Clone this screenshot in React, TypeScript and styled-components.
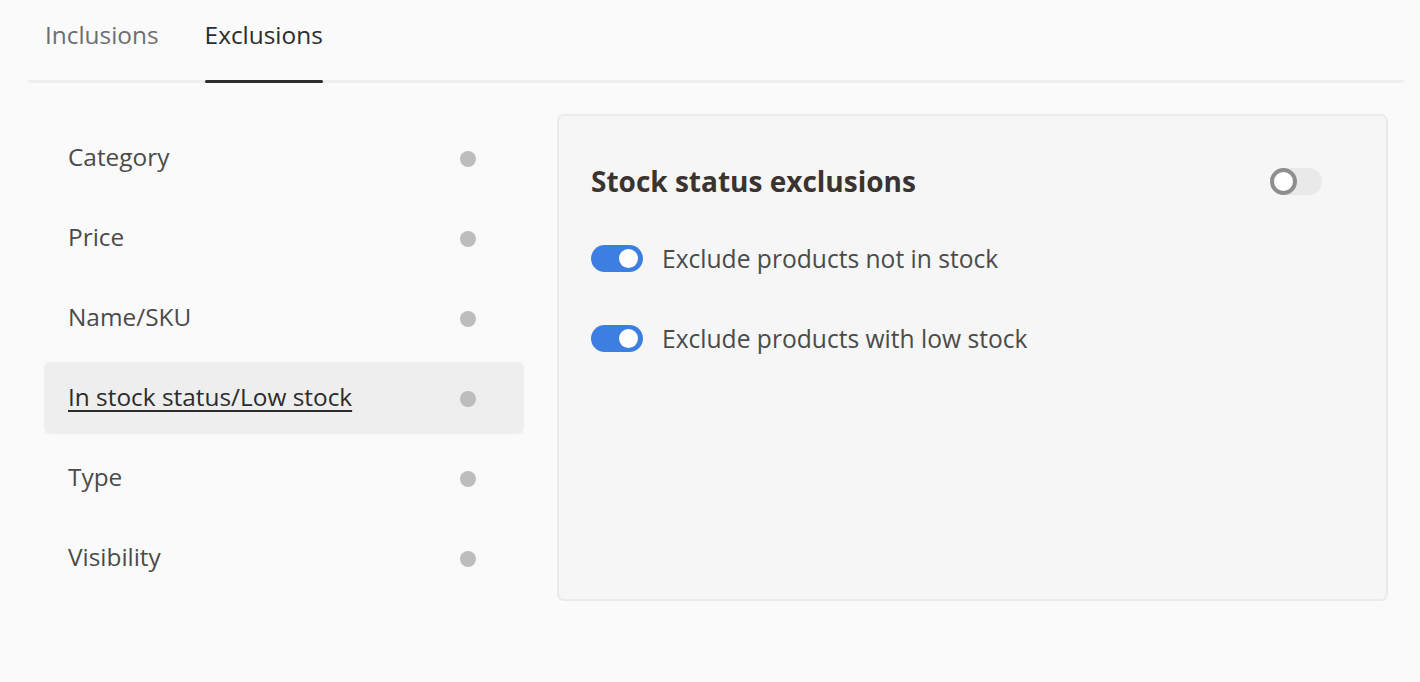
import * as React from 'react';
import styled, { createGlobalStyle } from 'styled-components';

const GlobalStyle = createGlobalStyle`
    html, body {
        margin: 0;
        padding: 0;
        background: #fafafa;
        font-family: "Open Sans", "Noto Sans", sans-serif;
    }
`;

const Page = styled.div`
    width: 1420px;
    height: 682px;
    padding: 0 16px 0 28px;
    box-sizing: border-box;
`;

const TabBar = styled.div`
    display: flex;
    gap: 46px;
    padding-left: 17px;
    border-bottom: 3px solid #efefef;
    height: 80px;
    box-sizing: content-box;
`;

const Tab = styled.div<{ active?: boolean }>`
    position: relative;
    font-size: 24.4px;
    line-height: 70px;
    color: ${p => (p.active ? '#2c2c2c' : '#6e6e6e')};
    &::after {
        content: '';
        display: ${p => (p.active ? 'block' : 'none')};
        position: absolute;
        left: 0;
        right: 0;
        bottom: -3px;
        height: 3px;
        border-radius: 2px;
        background: #2c2c2c;
    }
`;

const Body = styled.div`
    display: flex;
    gap: 33px;
    padding-top: 31px;
    padding-left: 16px;
`;

const SideList = styled.div`
    display: flex;
    flex-direction: column;
    gap: 8px;
    width: 480px;
    padding-top: 8px;
`;

const SideItem = styled.div<{ selected?: boolean }>`
    display: flex;
    align-items: center;
    justify-content: space-between;
    height: 72px;
    padding: 0 48px 0 24px;
    border-radius: 6px;
    font-size: 24.4px;
    color: ${p => (p.selected ? '#2c2c2c' : '#4b4b4b')};
    background: ${p => (p.selected ? '#eeeeee' : 'transparent')};
    text-decoration: ${p => (p.selected ? 'underline' : 'none')};
    text-underline-offset: 4px;
    text-decoration-thickness: 2px;
`;

const ItemLabel = styled.span`
    margin-bottom: 4px;
`;

const Dot = styled.span`
    width: 16px;
    height: 16px;
    margin-top: 2px;
    border-radius: 50%;
    background: #bdbdbd;
`;

const Panel = styled.div`
    width: 831px;
    height: 487px;
    box-sizing: border-box;
    background: #f6f6f6;
    border: 2px solid #ebebeb;
    border-radius: 7px;
    padding: 44px 64px 0 32px;
`;

const PanelHeader = styled.div`
    display: flex;
    align-items: center;
    justify-content: space-between;
    height: 42px;
    margin-bottom: 42px;
`;

const PanelTitle = styled.h2`
    margin: 0;
    font-size: 28px;
    font-weight: 700;
    color: #3b332f;
`;

const Option = styled.div`
    display: flex;
    align-items: center;
    gap: 19px;
    height: 28px;
    margin-bottom: 52px;
    font-size: 24.6px;
    color: #4b4b4b;
`;

const Track = styled.span<{ on?: boolean }>`
    position: relative;
    display: inline-block;
    width: 52px;
    height: 27px;
    border-radius: 14px;
    background: ${p => (p.on ? '#3d7fe0' : '#e9e9e9')};
    flex-shrink: 0;
`;

const Knob = styled.span<{ on?: boolean }>`
    position: absolute;
    top: ${p => (p.on ? '4px' : '0')};
    left: ${p => (p.on ? '28px' : '0')};
    width: ${p => (p.on ? '19px' : '27px')};
    height: ${p => (p.on ? '19px' : '27px')};
    box-sizing: border-box;
    border-radius: 50%;
    background: #fff;
    border: ${p => (p.on ? 'none' : '4px solid #8e8e8e')};
`;

const Toggle = ({ on }: { on?: boolean }) => (
    <Track on={on}>
        <Knob on={on} />
    </Track>
);

const items = ['Category', 'Price', 'Name/SKU', 'In stock status/Low stock', 'Type', 'Visibility'];

export default function App() {
    return (
        <Page>
            <GlobalStyle />
            <TabBar>
                <Tab>Inclusions</Tab>
                <Tab active>Exclusions</Tab>
            </TabBar>
            <Body>
                <SideList>
                    {items.map(label => (
                        <SideItem key={label} selected={label === 'In stock status/Low stock'}>
                            <ItemLabel>{label}</ItemLabel>
                            <Dot />
                        </SideItem>
                    ))}
                </SideList>
                <Panel>
                    <PanelHeader>
                        <PanelTitle>Stock status exclusions</PanelTitle>
                        <Toggle />
                    </PanelHeader>
                    <Option>
                        <Toggle on />
                        Exclude products not in stock
                    </Option>
                    <Option>
                        <Toggle on />
                        Exclude products with low stock
                    </Option>
                </Panel>
            </Body>
        </Page>
    );
}
